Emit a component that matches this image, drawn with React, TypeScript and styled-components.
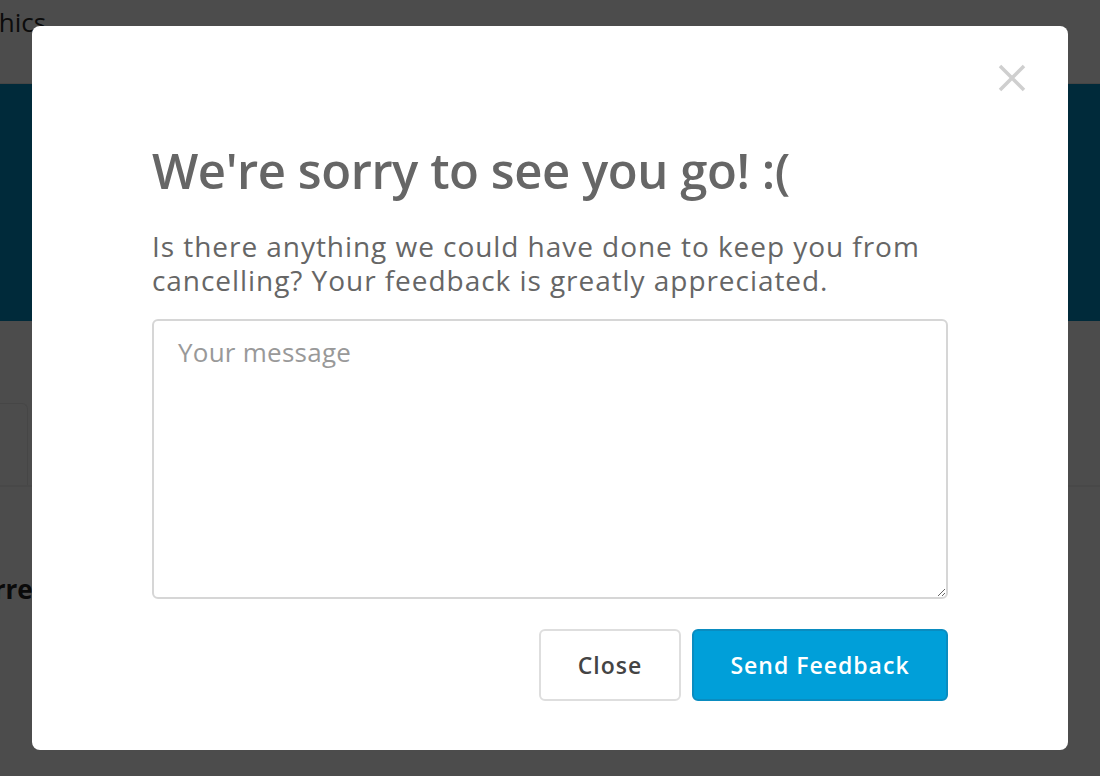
import React from "react";
import styled, { createGlobalStyle } from "styled-components";

const Global = createGlobalStyle`
  html, body { margin: 0; padding: 0; }
  body {
    font-family: "Open Sans", Lato, "Liberation Sans", sans-serif;
    background: #fdfdfd;
    overflow: hidden;
  }
  * { box-sizing: border-box; }
`;

const Page = styled.div`
  width: 1100px;
  height: 776px;
  display: flex;
  flex-direction: column;
  overflow: hidden;
`;

const Header = styled.header`
  height: 84px;
  flex: none;
  display: flex;
  align-items: flex-start;
  padding-top: 4px;
  border-bottom: 1px solid #e6e6e6;
`;

const NavLink = styled.span`
  margin-left: -104px;
  font-size: 26px;
  color: #2a2a2a;
  white-space: nowrap;
`;

const Hero = styled.section`
  height: 237px;
  flex: none;
  background: #008cc2;
`;

const Content = styled.section`
  flex: 1;
  display: flex;
  flex-direction: column;
`;

const Tabs = styled.div`
  margin-top: 82px;
  display: flex;
  align-items: flex-end;
  border-bottom: 2px solid #f0f0f0;
`;

const Tab = styled.div`
  width: 60px;
  height: 82px;
  margin-left: -32px;
  border: 1px solid #eaeaea;
  border-bottom: none;
  border-radius: 0 6px 0 0;
`;

const SectionTitle = styled.h2`
  margin: 84px 0 0 -40px;
  font-size: 26px;
  font-weight: 700;
  color: #222;
  white-space: nowrap;
`;

const Overlay = styled.div`
  position: fixed;
  inset: 0;
  background: rgba(0, 0, 0, 0.7);
  display: flex;
  justify-content: center;
  align-items: flex-start;
  padding-top: 26px;
`;

const Modal = styled.div`
  position: relative;
  width: 1036px;
  height: 724px;
  background: #fff;
  border-radius: 8px;
  padding: 112px 120px 0 120px;
  display: flex;
  flex-direction: column;
`;

const CloseX = styled.button`
  position: absolute;
  top: 37px;
  right: 41px;
  width: 30px;
  height: 30px;
  padding: 0;
  border: none;
  background: transparent;
  display: flex;
  align-items: center;
  justify-content: center;
  cursor: pointer;
`;

const Title = styled.h1`
  margin: 0;
  font-size: 49px;
  line-height: 64px;
  font-weight: 600;
  color: #666;
  letter-spacing: -0.45px;
`;

const Lead = styled.p`
  margin: 27px 0 0 0;
  font-size: 28px;
  line-height: 34px;
  color: #666;
  width: 800px;
  letter-spacing: 0.95px;
`;

const Message = styled.textarea`
  margin-top: 22px;
  width: 796px;
  height: 280px;
  border: 2px solid #d6d6d6;
  border-radius: 6px;
  padding: 14px 24px;
  font-family: inherit;
  font-size: 26px;
  line-height: 34px;
  letter-spacing: 0.25px;
  color: #555;
  outline: none;
  &::placeholder { color: #999; }
`;

const Actions = styled.div`
  margin-top: 30px;
  width: 796px;
  display: flex;
  justify-content: flex-end;
  gap: 11px;
`;

const Button = styled.button<{ $primary?: boolean }>`
  height: 72px;
  padding: 0;
  width: ${(p) => (p.$primary ? "256px" : "142px")};
  border-radius: 6px;
  font-family: inherit;
  font-size: 23px;
  font-weight: 600;
  letter-spacing: 1px;
  cursor: pointer;
  border: 2px solid ${(p) => (p.$primary ? "#0a8cc0" : "#dedede")};
  background: ${(p) => (p.$primary ? "#009fd9" : "#fff")};
  color: ${(p) => (p.$primary ? "#fff" : "#444")};
`;

export default function App() {
  return (
    <>
      <Global />
      <Page>
        <Header>
          <NavLink>Infographics</NavLink>
        </Header>
        <Hero />
        <Content>
          <Tabs>
            <Tab />
          </Tabs>
          <SectionTitle>Current Plan</SectionTitle>
        </Content>
      </Page>
      <Overlay>
        <Modal>
          <CloseX aria-label="Close">
            <svg width="30" height="30" viewBox="0 0 30 30">
              <path
                d="M3 3 L27 27 M27 3 L3 27"
                stroke="#cfcfcf"
                strokeWidth="3.5"
                strokeLinecap="butt"
              />
            </svg>
          </CloseX>
          <Title>We're sorry to see you go! :(</Title>
          <Lead>
            Is there anything we could have done to keep you from cancelling?
            Your feedback is greatly appreciated.
          </Lead>
          <Message placeholder="Your message" />
          <Actions>
            <Button>Close</Button>
            <Button $primary>Send Feedback</Button>
          </Actions>
        </Modal>
      </Overlay>
    </>
  );
}
